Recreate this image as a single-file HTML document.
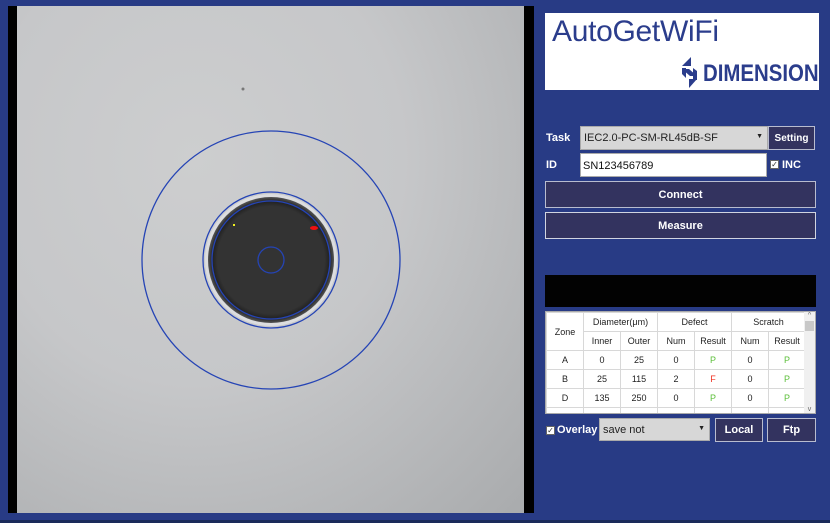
<!DOCTYPE html>
<html><head><meta charset="utf-8"><style>
*{margin:0;padding:0;box-sizing:border-box}
body{width:830px;height:523px;background:#283b85;position:relative;overflow:hidden;font-family:"Liberation Sans",sans-serif}
.a{position:absolute}
.btn{position:absolute;background:#33335f;border:1px solid #b8bccf;color:#fff;font-weight:bold;font-size:11px;display:flex;align-items:center;justify-content:center}
.lbl{position:absolute;color:#fff;font-weight:bold;font-size:11px}
table{border-collapse:collapse;font-size:9px;color:#222;background:#fff;table-layout:fixed}
td{border:1px solid #d8d8d8;text-align:center;height:19px;padding:0;overflow:hidden;white-space:nowrap}
.g{color:#5cbf3a}.r{color:#f03020}
.cb{position:absolute;width:9px;height:9px;background:#fff;border:1px solid #666;font-size:8px;line-height:7px;text-align:center;color:#333}
</style></head><body>
<div class="a" style="left:8px;top:6px;width:526px;height:507px;background:#000"></div>
<div class="a" style="left:17px;top:6px;width:507px;height:507px;background:radial-gradient(ellipse at 35% 30%,#cdcecf 0%,#c6c7c9 45%,#a9abad 100%)"></div>
<svg class="a" style="left:0;top:0" width="540" height="520">
<defs><radialGradient id="f"><stop offset="0.85" stop-color="#333"/><stop offset="0.93" stop-color="#222"/><stop offset="1" stop-color="#555"/></radialGradient></defs>
<circle cx="271" cy="260" r="66" fill="#dcdddf"/>
<circle cx="271" cy="260" r="63" fill="url(#f)"/>
<circle cx="271" cy="260" r="129" fill="none" stroke="#2544b5" stroke-width="1.3"/>
<circle cx="271" cy="260" r="68" fill="none" stroke="#2544b5" stroke-width="1.3"/>
<circle cx="271" cy="260" r="59" fill="none" stroke="#2544b5" stroke-width="1.3"/>
<circle cx="271" cy="260" r="13" fill="none" stroke="#2544b5" stroke-width="1.3"/>
<ellipse cx="314" cy="228" rx="4" ry="2" fill="#f01010"/>
<rect x="233" y="224" width="2" height="2" fill="#f0f020"/>
<circle cx="243" cy="89" r="1.5" fill="#777"/>
</svg>
<div class="a" style="left:0;top:520px;width:830px;height:3px;background:#1a2a5a"></div>
<div class="a" style="left:545px;top:13px;width:274px;height:77px;background:#fff"></div>
<div class="a" style="left:552px;top:15px;font-family:'Liberation Sans',sans-serif;font-size:30px;color:#2b3d8c;letter-spacing:-0.3px">AutoGetWiFi</div>
<svg class="a" style="left:680px;top:56px" width="20" height="33"><polygon points="11,1 11,10 2,10" fill="#2b3d8c"/><polygon points="2,13 9,13 17,20 10,20" fill="#2b3d8c"/><polygon points="9,23 17,23 9,32" fill="#2b3d8c"/><polygon points="2,12 6,12 6,22 2,18" fill="#2b3d8c"/><polygon points="13,12 17,15 17,24 13,24" fill="#2b3d8c"/></svg>
<div class="a" style="left:703px;top:60px;font-size:24px;font-weight:bold;color:#2b3d8c;letter-spacing:0px;transform:scaleX(0.85);transform-origin:left">DIMENSION</div>
<div class="lbl" style="left:546px;top:132px">Task</div>
<div class="a" style="left:580px;top:126px;width:188px;height:24px;background:#d7d7d7;border:1px solid #aaa;font-size:11px;color:#222;padding:5px 0 0 3px">IEC2.0-PC-SM-RL45dB-SF<span style="position:absolute;right:4px;top:6px;font-size:7px">▼</span></div>
<div class="btn" style="left:768px;top:126px;width:47px;height:24px;font-size:10px">Setting</div>
<div class="lbl" style="left:546px;top:159px">ID</div>
<div class="a" style="left:580px;top:153px;width:187px;height:24px;background:#fff;border:1px solid #aaa;font-size:11px;color:#111;padding:6px 0 0 2px">SN123456789</div>
<div class="cb" style="left:770px;top:160px">✓</div>
<div class="lbl" style="left:782px;top:159px">INC</div>
<div class="btn" style="left:545px;top:181px;width:271px;height:27px">Connect</div>
<div class="btn" style="left:545px;top:212px;width:271px;height:27px;border-color:#d0d4e0">Measure</div>
<div class="a" style="left:545px;top:275px;width:271px;height:32px;background:#020202"></div>
<div class="a" style="left:545px;top:311px;width:271px;height:103px;background:#fff;border:1px solid #aaa;overflow:hidden">
<table style="width:259px">
<colgroup><col style="width:37px"><col style="width:37px"><col style="width:37px"><col style="width:37px"><col style="width:37px"><col style="width:37px"><col style="width:37px"></colgroup>
<tr><td rowspan="2" style="height:38px">Zone</td><td colspan="2">Diameter(μm)</td><td colspan="2">Defect</td><td colspan="2">Scratch</td></tr>
<tr><td>Inner</td><td>Outer</td><td>Num</td><td>Result</td><td>Num</td><td>Result</td></tr>
<tr><td>A</td><td>0</td><td>25</td><td>0</td><td class="g">P</td><td>0</td><td class="g">P</td></tr>
<tr><td>B</td><td>25</td><td>115</td><td>2</td><td class="r">F</td><td>0</td><td class="g">P</td></tr>
<tr><td>D</td><td>135</td><td>250</td><td>0</td><td class="g">P</td><td>0</td><td class="g">P</td></tr>
<tr><td></td><td></td><td></td><td></td><td></td><td></td><td></td></tr>
</table>
<div class="a" style="right:0;top:0;width:11px;height:101px;background:#f0f0f0;font-size:7px;color:#666;text-align:center">^<div style="margin:2px 1px;height:10px;background:#c8c8c8"></div><div style="position:absolute;bottom:0;width:11px">v</div></div>
</div>
<div class="cb" style="left:546px;top:426px">✓</div>
<div class="lbl" style="left:557px;top:424px;font-size:11px">Overlay</div>
<div class="a" style="left:599px;top:418px;width:111px;height:23px;background:#d7d7d7;border:1px solid #aaa;font-size:11px;color:#222;padding:5px 0 0 3px">save not<span style="position:absolute;right:4px;top:6px;font-size:7px">▼</span></div>
<div class="btn" style="left:715px;top:418px;width:48px;height:24px">Local</div>
<div class="btn" style="left:767px;top:418px;width:49px;height:24px">Ftp</div>
</body></html>
